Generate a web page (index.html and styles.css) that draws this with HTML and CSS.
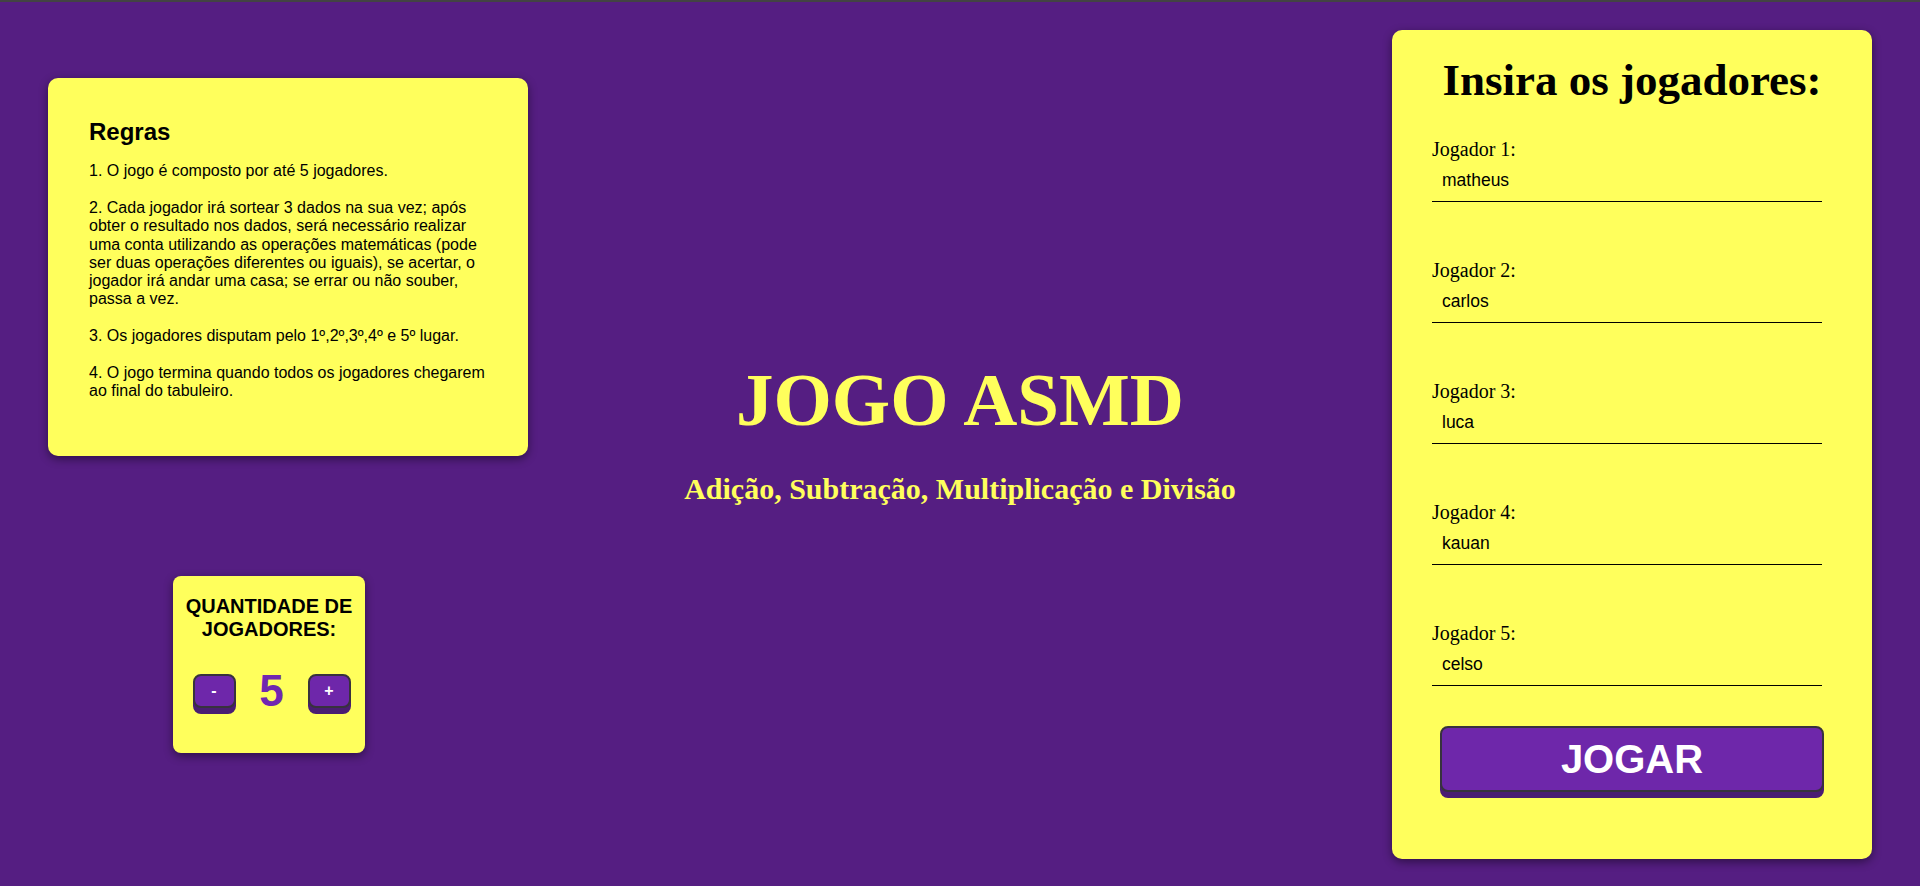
FILE: index.html
```html
<!DOCTYPE html>
<html lang="pt-BR">
<head>
<meta charset="utf-8">
<title>Jogo ASMD</title>
<link rel="stylesheet" href="styles.css">
</head>
<body>
<div class="page">
  <aside class="left">
    <section class="card rules">
      <h2 class="rules-title">Regras</h2>
      <p>1. O jogo é composto por até 5 jogadores.</p>
      <p>2. Cada jogador irá sortear 3 dados na sua vez; após obter o resultado nos dados, será necessário realizar uma conta utilizando as operações matemáticas (pode ser duas operações diferentes ou iguais), se acertar, o jogador irá andar uma casa; se errar ou não souber, passa a vez.</p>
      <p>3. Os jogadores disputam pelo 1º,2º,3º,4º e 5º lugar.</p>
      <p>4. O jogo termina quando todos os jogadores chegarem ao final do tabuleiro.</p>
    </section>
    <section class="card qty">
      <h3 class="qty-title">QUANTIDADE DE JOGADORES:</h3>
      <div class="qty-row">
        <button class="qty-btn" type="button">-</button>
        <span class="qty-num">5</span>
        <button class="qty-btn" type="button">+</button>
      </div>
    </section>
  </aside>

  <main class="center">
    <h1 class="title">JOGO ASMD</h1>
    <p class="subtitle">Adição, Subtração, Multiplicação e Divisão</p>
  </main>

  <section class="card players">
    <h2 class="players-title">Insira os jogadores:</h2>
    <div class="fields">
      <div class="field">
        <label class="field-label" for="j1">Jogador 1:</label>
        <input class="field-input" id="j1" type="text" value="matheus">
      </div>
      <div class="field">
        <label class="field-label" for="j2">Jogador 2:</label>
        <input class="field-input" id="j2" type="text" value="carlos">
      </div>
      <div class="field">
        <label class="field-label" for="j3">Jogador 3:</label>
        <input class="field-input" id="j3" type="text" value="luca">
      </div>
      <div class="field">
        <label class="field-label" for="j4">Jogador 4:</label>
        <input class="field-input" id="j4" type="text" value="kauan">
      </div>
      <div class="field">
        <label class="field-label" for="j5">Jogador 5:</label>
        <input class="field-input" id="j5" type="text" value="celso">
      </div>
    </div>
    <button class="play-btn" type="button">JOGAR</button>
  </section>
</div>
</body>
</html>
```

FILE: styles.css
```css
html, body {
  margin: 0;
  padding: 0;
}

body {
  background: #551e82;
  font-family: "Liberation Sans", Arial, sans-serif;
  color: #000;
}

.page {
  box-sizing: border-box;
  height: 100vh;
  border-top: 2px solid #434343;
  padding: 0 48px;
  display: flex;
  align-items: center;
}

.card {
  background: #ffff5c;
  box-shadow: 0 3px 10px rgba(0, 0, 0, 0.45);
  box-sizing: border-box;
}

/* Left column */
.left {
  width: 480px;
  flex: none;
  align-self: flex-start;
  margin-top: 76.4px;
  display: flex;
  flex-direction: column;
  align-items: flex-start;
}

.rules {
  width: 480px;
  padding: 40px 40px 56px 41px;
  border-radius: 10px;
}

.rules-title {
  margin: 0 0 17px;
  font-size: 24px;
  line-height: 27px;
  font-weight: bold;
}

.rules p {
  margin: 0 0 18.3px;
  font-size: 16px;
  line-height: 18.3px;
}

.rules p:last-child {
  margin-bottom: 0;
}

.qty {
  width: 192px;
  margin: 119.7px 0 0 125px;
  padding: 19px 10px 41px;
  border-radius: 8px;
}

.qty-title {
  margin: 0 0 29px;
  font-size: 20px;
  line-height: 23px;
  font-weight: bold;
  text-align: center;
}

.qty-row {
  display: flex;
  justify-content: center;
  align-items: center;
  gap: 20px;
  padding-left: 5px;
}

.qty-btn {
  width: 43px;
  height: 34px;
  box-sizing: border-box;
  padding: 0;
  border: 2px solid #38323d;
  border-radius: 8px;
  background: #6e27aa;
  box-shadow: 0 6px 0 #4a1d72;
  color: #fff;
  font-family: "Liberation Sans", Arial, sans-serif;
  font-size: 16px;
  font-weight: bold;
  line-height: 1;
}

.qty-num {
  width: 32px;
  text-align: center;
  font-size: 44px;
  line-height: 42px;
  font-weight: bold;
  color: #7027b0;
}

/* Center column */
.center {
  flex: 1;
  display: flex;
  flex-direction: column;
  align-items: center;
  padding-bottom: 25px;
}

.title {
  margin: 0;
  font-family: "Liberation Serif", "Times New Roman", serif;
  font-size: 75px;
  font-weight: bold;
  color: #ffff5c;
}

.subtitle {
  margin: 29px 0 0;
  font-family: "Liberation Serif", "Times New Roman", serif;
  font-size: 30px;
  font-weight: bold;
  color: #ffff5c;
}

/* Right card */
.players {
  width: 480px;
  flex: none;
  padding: 25px 40px 66.5px;
  border-radius: 10px;
}

.players-title {
  margin: 0 0 33.5px;
  font-family: "Liberation Serif", "Times New Roman", serif;
  font-size: 45px;
  line-height: 50px;
  font-weight: bold;
  text-align: center;
}

.fields {
  display: flex;
  flex-direction: column;
  gap: 57px;
}

.field-label {
  display: block;
  font-family: "Liberation Serif", "Times New Roman", serif;
  font-size: 20px;
  line-height: 22px;
}

.field-input {
  display: block;
  width: 390px;
  height: 42px;
  box-sizing: border-box;
  margin: 0;
  padding: 10px 10px;
  border: 0;
  border-bottom: 1px solid #000;
  background: transparent;
  font-family: "Liberation Sans", Arial, sans-serif;
  font-size: 17.5px;
  line-height: 20px;
  color: #000;
  outline: none;
}

.play-btn {
  display: block;
  width: 384px;
  height: 66px;
  box-sizing: border-box;
  margin: 40px auto 0;
  padding: 0;
  border: 2px solid #38323d;
  border-radius: 8px;
  background: #6e27aa;
  box-shadow: 0 6px 0 #4a1d72;
  color: #fff;
  font-family: "Liberation Sans", Arial, sans-serif;
  font-size: 40px;
  font-weight: bold;
  line-height: 1;
}
```
